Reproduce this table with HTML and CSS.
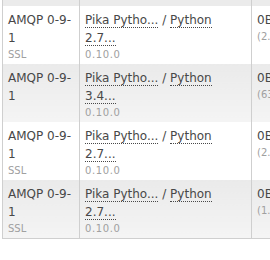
FILE: index.html
```html
<!DOCTYPE html>
<html>
<head>
<meta charset="utf-8">
<link rel="stylesheet" href="styles.css">
</head>
<body>
<table class="list">
  <colgroup><col class="c1"><col class="c2"><col class="c3"></colgroup>
  <tr class="top"><td></td><td></td><td></td></tr>
  <tr class="odd">
    <td>AMQP 0-9-<br>1<span class="sub">SSL</span></td>
    <td><abbr>Pika Pytho...</abbr> / <abbr>Python</abbr><br><abbr>2.7...</abbr><span class="sub ver">0.10.0</span></td>
    <td>0B<span class="sub">(2.3kB/s)</span></td>
  </tr>
  <tr class="even">
    <td>AMQP 0-9-<br>1</td>
    <td><abbr>Pika Pytho...</abbr> / <abbr>Python</abbr><br><abbr>3.4...</abbr><span class="sub ver">0.10.0</span></td>
    <td>0B<span class="sub">(63B/s)</span></td>
  </tr>
  <tr class="odd">
    <td>AMQP 0-9-<br>1<span class="sub">SSL</span></td>
    <td><abbr>Pika Pytho...</abbr> / <abbr>Python</abbr><br><abbr>2.7...</abbr><span class="sub ver">0.10.0</span></td>
    <td>0B<span class="sub">(2.4kB/s)</span></td>
  </tr>
  <tr class="even">
    <td>AMQP 0-9-<br>1<span class="sub">SSL</span></td>
    <td><abbr>Pika Pytho...</abbr> / <abbr>Python</abbr><br><abbr>2.7...</abbr><span class="sub ver">0.10.0</span></td>
    <td>0B<span class="sub">(1.8kB/s)</span></td>
  </tr>
</table>
</body>
</html>
```
FILE: styles.css
```css
body {
  margin: 0;
  font-family: Verdana, "DejaVu Sans", sans-serif;
  font-size: 12px;
  color: #484848;
  background: #fff;
}
table.list {
  border-collapse: collapse;
  table-layout: fixed;
  width: 330px;
  margin-left: 2px;
}
col.c1 { width: 77px; }
col.c2 { width: 172px; }
td {
  border: 1px solid #cfcfcf;
  border-top: none;
  border-bottom: none;
  padding: 5px 3px 2px 5px;
  vertical-align: top;
  line-height: 18px;
  overflow: hidden;
  white-space: nowrap;
}
tr.top td {
  height: 6px;
  padding: 0;
  background: #ebebeb;
}
tr.odd td { background: #fff; }
tr.even td { background: linear-gradient(#eaeaea, #f4f4f4); }
tr:last-child td { border-bottom: 1px solid #cfcfcf; }
abbr {
  text-decoration: none;
  border-bottom: 1px dotted #484848;
}
.sub {
  display: block;
  font-size: 10px;
  line-height: 15px;
  color: #a0a0a0;
}
.sub.ver {
  letter-spacing: 0.6px;
}
```
